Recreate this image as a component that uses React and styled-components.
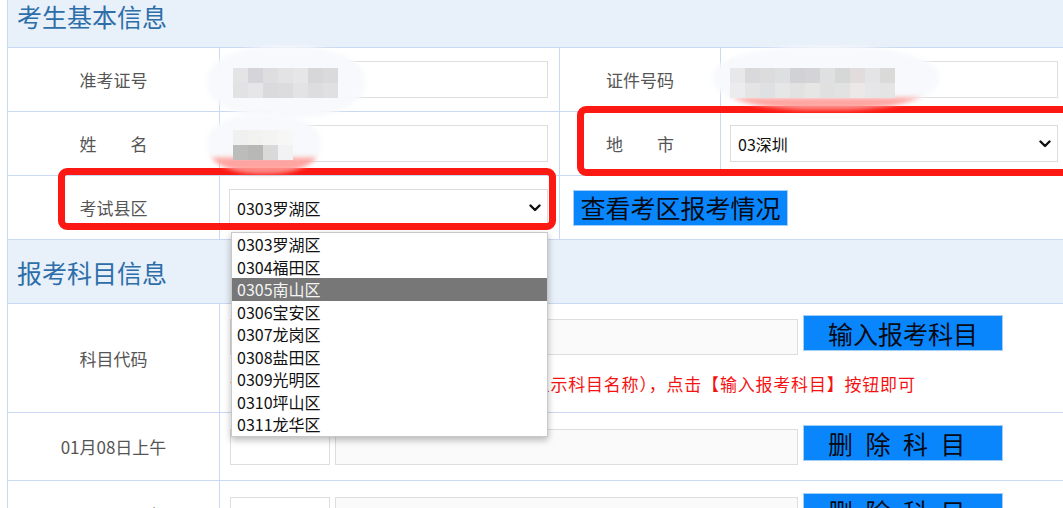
import React from "react";
import styled, { createGlobalStyle } from "styled-components";

const LINE = "#c9d9f1";

const GlobalStyle = createGlobalStyle`
  * { box-sizing: border-box; }
  html, body { margin: 0; padding: 0; overflow: hidden; background: #fff; }
  body { font-family: "Noto Sans CJK SC", "Noto Sans", sans-serif; }
`;

const Page = styled.div`
  position: relative;
  width: 1063px;
  height: 508px;
  overflow: hidden;
`;

const Sheet = styled.div`
  margin-top: -16px;
  margin-left: 7px;
  width: 1062px;
  border-left: 1px solid ${LINE};
`;

const SectionHeader = styled.div`
  height: 64px;
  padding: 1px 0 0 9px;
  display: flex;
  align-items: center;
  background: #e8f0f9;
  border-bottom: 1px solid ${LINE};
  font-size: 25px;
  color: #2d6ea9;
`;

const InfoGrid = styled.div`
  display: grid;
  grid-template-columns: 212px 340px 161px 1fr;
  grid-auto-rows: 64px;
`;

const SubjectGrid = styled.div`
  display: grid;
  grid-template-columns: 212px 1fr;
`;

const Cell = styled.div`
  position: relative;
  display: flex;
  align-items: center;
  grid-column: span ${(p) => p.$span || 1};
  height: ${(p) => (p.$h ? `${p.$h}px` : "auto")};
  padding-left: ${(p) => p.$pad ?? 9}px;
  border-bottom: 1px solid ${LINE};
  border-right: ${(p) => (p.$last ? "none" : `1px solid ${LINE}`)};
`;

const Label = styled(Cell)`
  justify-content: center;
  padding-left: 0;
  font-size: 17px;
  color: #555;
`;

const TextBox = styled.div`
  width: ${(p) => p.$w}px;
  height: ${(p) => p.$hgt || 37}px;
  border: 1px solid #dedede;
  background: ${(p) => (p.$grey ? "#fafafa" : "#fff")};
`;

const SelectWrap = styled.div`
  position: relative;
`;

const SelectBox = styled.div`
  width: ${(p) => p.$w}px;
  height: 37px;
  padding: 0 6px 0 7px;
  display: flex;
  align-items: center;
  justify-content: space-between;
  border: 1px solid #dcdcdc;
  background: #fff;
  font-size: 16px;
  color: #111;
`;

const Chevron = () => (
  <svg width="12" height="8" viewBox="0 0 12 8">
    <polyline
      points="1.5,1.5 6,6 10.5,1.5"
      fill="none"
      stroke="#111"
      strokeWidth="2.4"
      strokeLinecap="round"
      strokeLinejoin="round"
    />
  </svg>
);

const OptionList = styled.ul`
  position: absolute;
  z-index: 20;
  top: calc(100% + 6px);
  left: 2px;
  width: 317px;
  margin: 0;
  padding: 0;
  list-style: none;
  background: #fff;
  border: 1px solid #c8c8c8;
  box-shadow: 0 3px 7px rgba(0, 0, 0, 0.28);
`;

const Option = styled.li`
  height: 22.5px;
  line-height: 22.5px;
  padding-left: 5px;
  font-size: 16px;
  color: ${(p) => (p.$active ? "#f4f4f4" : "#111")};
  background: ${(p) => (p.$active ? "#777" : "transparent")};
`;

const BlueButton = styled.button`
  width: ${(p) => p.$w}px;
  height: 36px;
  padding: 0;
  background: #0a86fd;
  border: 1px solid #a3cdf2;
  color: #050a14;
  font-family: inherit;
  font-size: 25px;
  line-height: 1;
  letter-spacing: ${(p) => (p.$spread ? "12.5px" : "0")};
  margin-top: ${(p) => p.$lift || 0}px;
`;

const SubjectCell = styled(Cell)`
  flex-direction: column;
  align-items: flex-start;
  justify-content: flex-start;
  padding: ${(p) => p.$top || 0}px 0 0 10px;
`;

const InputLine = styled.div`
  display: flex;
  align-items: flex-start;
  gap: 5px;
`;

const Hint = styled.p`
  margin: 17px 0 0 0;
  font-size: 17px;
  letter-spacing: 0.8px;
  line-height: 24px;
  color: #f41313;
  white-space: nowrap;
`;

/* annotations drawn over the screenshot */
const RedFrame = styled.div`
  position: absolute;
  z-index: 5;
  left: ${(p) => p.$x}px;
  top: ${(p) => p.$y}px;
  width: ${(p) => p.$w}px;
  height: ${(p) => p.$h}px;
  border: 7px solid #fd1913;
  border-radius: 9px;
  pointer-events: none;
`;

const Smudge = styled.div`
  position: absolute;
  z-index: 6;
  left: ${(p) => p.$x}px;
  top: ${(p) => p.$y}px;
  width: ${(p) => p.$w}px;
  height: ${(p) => p.$h}px;
  border-radius: 45%;
  background: ${(p) =>
    p.$tint
      ? `linear-gradient(to bottom, rgba(247,249,252,0.97) 0%, rgba(247,249,252,0.97) ${p.$tint}%, rgba(255,150,145,0.9) ${p.$tint + 6}%, rgba(255,160,155,0.85) 100%)`
      : "rgba(247,249,252,0.97)"};
  filter: blur(2px);
`;

const Mosaic = styled.div`
  position: absolute;
  z-index: 7;
  left: ${(p) => p.$x}px;
  top: ${(p) => p.$y}px;
  display: grid;
  grid-template-columns: repeat(${(p) => p.$cols}, 15px);
  grid-auto-rows: 15px;
`;

const Tile = styled.div`
  background: ${(p) => p.$c};
`;

const districts = [
  "0303罗湖区",
  "0304福田区",
  "0305南山区",
  "0306宝安区",
  "0307龙岗区",
  "0308盐田区",
  "0309光明区",
  "0310坪山区",
  "0311龙华区",
];

const mosaicA = [
  "#e4e4e7", "#d5d5d9", "#dedee0", "#e3e3e5", "#e6e6e8", "#d7d7da", "#dadadd",
  "#e2e2e5", "#e6e6e8", "#dadadc", "#dcdcde", "#e3e2e4", "#dddde0", "#e0e0e2",
];
const mosaicB = [
  "#e8e8ea", "#d9d9db", "#dcdcdd", "#dedfe0", "#d2d2d6", "#d4d4d6", "#dfe0e1", "#d6d8d8", "#e2dcdd", "#e4e4e6", "#dadad8",
  "#ececee", "#e4e4e5", "#dfe0e1", "#e6e6e7", "#e2e2e3", "#e6e6e4", "#e0e0e1", "#e2e2e3", "#ece8e8", "#e6e6e8", "#e4e4e5",
];
const mosaicC = [
  "#f0f0f0", "#f2f2f1", "#f4f4f3", "#f7f7f8",
  "#bcbdbb", "#b8b9b6", "#d9d9d9", "#f2f2f4",
];

function SubjectRow({ label, top, height, hint, buttonText, spread, lift }) {
  return (
    <>
      <Label $h={height}>{label}</Label>
      <SubjectCell $h={height} $top={top} $last>
        <InputLine>
          <TextBox $w={100} $hgt={36} />
          <TextBox $w={463} $hgt={36} $grey />
          <BlueButton $w={200} $spread={spread} $lift={lift}>
            {buttonText}
          </BlueButton>
        </InputLine>
        {hint && <Hint>{hint}</Hint>}
      </SubjectCell>
    </>
  );
}

export default function App() {
  return (
    <>
      <GlobalStyle />
      <Page>
        <Sheet>
          <SectionHeader>考生基本信息</SectionHeader>
          <InfoGrid>
            <Label>准考证号</Label>
            <Cell>
              <TextBox $w={319} />
            </Cell>
            <Label>证件号码</Label>
            <Cell $last>
              <TextBox $w={328} />
            </Cell>

            <Label>姓　　名</Label>
            <Cell>
              <TextBox $w={319} />
            </Cell>
            <Label>地　　市</Label>
            <Cell $last>
              <SelectBox $w={328}>
                <span>03深圳</span>
                <Chevron />
              </SelectBox>
            </Cell>

            <Label>考试县区</Label>
            <Cell>
              <SelectWrap>
                <SelectBox $w={319}>
                  <span>0303罗湖区</span>
                  <Chevron />
                </SelectBox>
                <OptionList>
                  {districts.map((d, i) => (
                    <Option key={d} $active={i === 2}>
                      {d}
                    </Option>
                  ))}
                </OptionList>
              </SelectWrap>
            </Cell>
            <Cell $span={2} $pad={13} $last>
              <BlueButton $w={215}>查看考区报考情况</BlueButton>
            </Cell>
          </InfoGrid>

          <SectionHeader>报考科目信息</SectionHeader>
          <SubjectGrid>
            <SubjectRow
              label="科目代码"
              height={109}
              top={15}
              lift={-4}
              buttonText="输入报考科目"
              hint="请在左框输入科目代码后（右框将自动显示科目名称），点击【输入报考科目】按钮即可"
            />
            <SubjectRow
              label="01月08日上午"
              height={68}
              top={16}
              lift={-4}
              spread
              buttonText="删除科目"
            />
            <SubjectRow
              label="01月08日下午"
              height={68}
              top={16}
              lift={-4}
              spread
              buttonText="删除科目"
            />
          </SubjectGrid>
        </Sheet>

        <RedFrame $x={58} $y={168} $w={498} $h={62} />
        <RedFrame $x={577} $y={106} $w={500} $h={70} />

        <Smudge $x={207} $y={46} $w={158} $h={72} />
        <Mosaic $x={233} $y={68} $cols={7}>
          {mosaicA.map((c, i) => (
            <Tile key={i} $c={c} />
          ))}
        </Mosaic>

        <Smudge $x={713} $y={46} $w={226} $h={64} $tint={78} />
        <Mosaic $x={730} $y={68} $cols={11}>
          {mosaicB.map((c, i) => (
            <Tile key={i} $c={c} />
          ))}
        </Mosaic>

        <Smudge $x={207} $y={114} $w={114} $h={60} $tint={70} />
        <Mosaic $x={233} $y={130} $cols={4}>
          {mosaicC.map((c, i) => (
            <Tile key={i} $c={c} />
          ))}
        </Mosaic>
      </Page>
    </>
  );
}
